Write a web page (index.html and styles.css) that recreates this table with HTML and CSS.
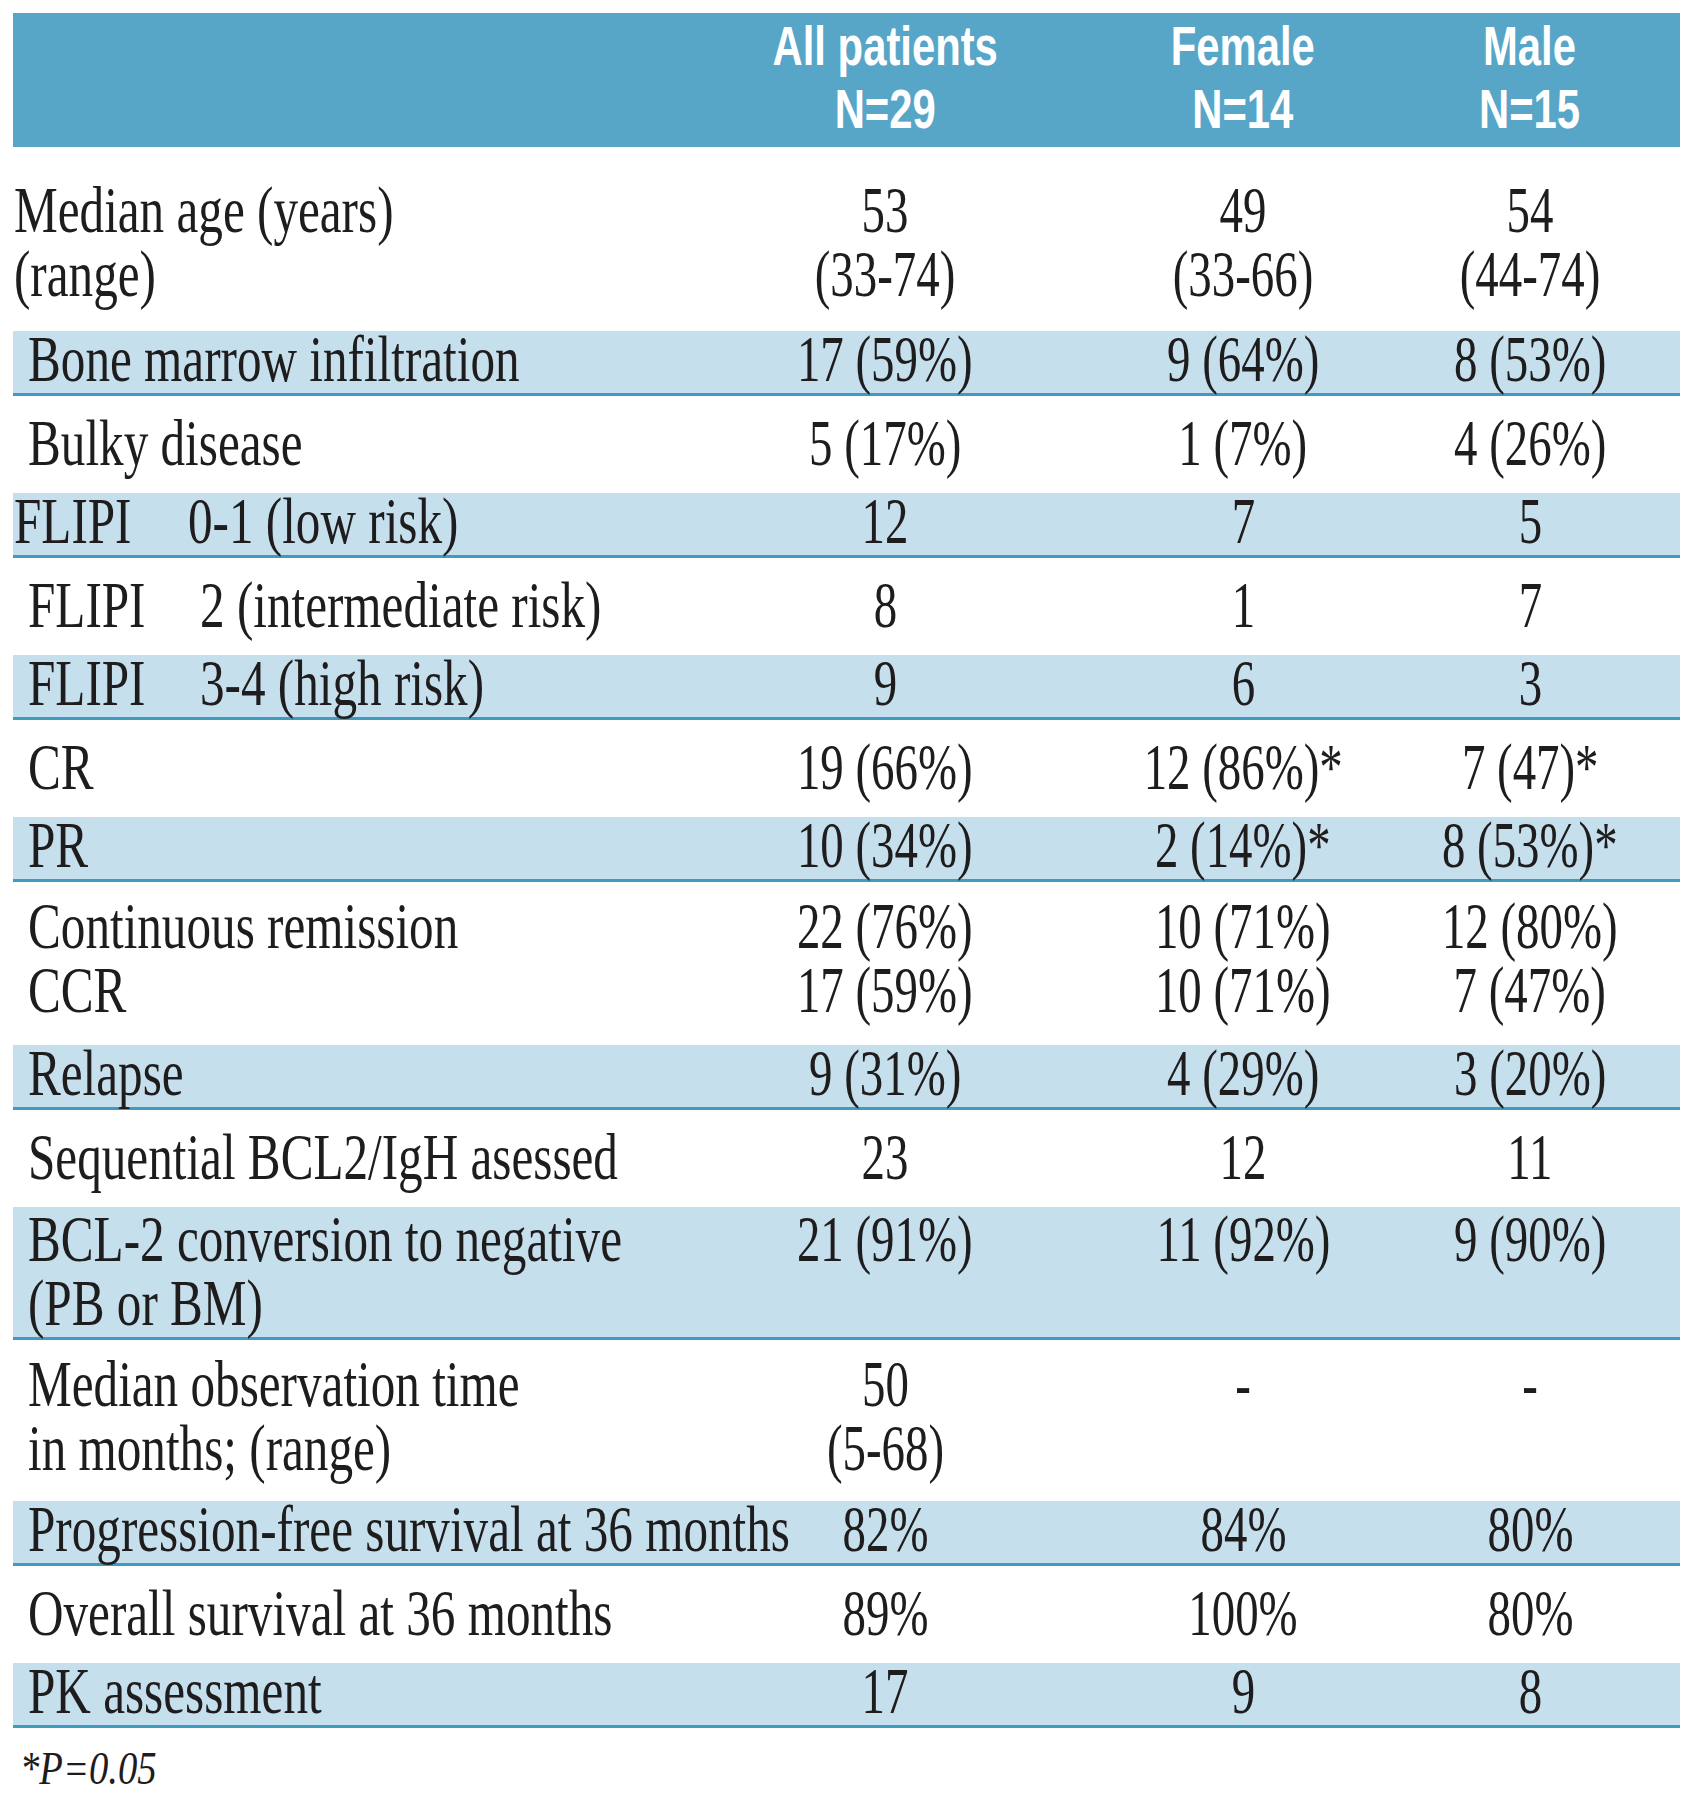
FILE: index.html
```html
<!DOCTYPE html>
<html lang="en">
<head>
<meta charset="utf-8">
<title>Patient characteristics</title>
<link rel="stylesheet" href="styles.css">
</head>
<body>
<div class="table">
  <div class="row head">
    <div class="cell"></div>
    <div class="cell val"><span class="h">All patients<br>N=29</span></div>
    <div class="cell val"><span class="h">Female<br>N=14</span></div>
    <div class="cell val"><span class="h">Male<br>N=15</span></div>
  </div>

  <div class="row white multi r-median">
    <div class="cell label flush"><span class="t">Median age (years)<br>(range)</span></div>
    <div class="cell val"><span class="t">53<br>(33-74)</span></div>
    <div class="cell val"><span class="t">49<br>(33-66)</span></div>
    <div class="cell val"><span class="t">54<br>(44-74)</span></div>
  </div>

  <div class="row blue">
    <div class="cell label"><span class="t">Bone marrow infiltration</span></div>
    <div class="cell val"><span class="t">17 (59%)</span></div>
    <div class="cell val"><span class="t">9 (64%)</span></div>
    <div class="cell val"><span class="t">8 (53%)</span></div>
  </div>

  <div class="row white">
    <div class="cell label"><span class="t">Bulky disease</span></div>
    <div class="cell val"><span class="t">5 (17%)</span></div>
    <div class="cell val"><span class="t">1 (7%)</span></div>
    <div class="cell val"><span class="t">4 (26%)</span></div>
  </div>

  <div class="row blue">
    <div class="cell label flush"><span class="t key key-wide">FLIPI</span><span class="t">0-1 (low risk)</span></div>
    <div class="cell val"><span class="t">12</span></div>
    <div class="cell val"><span class="t">7</span></div>
    <div class="cell val"><span class="t">5</span></div>
  </div>

  <div class="row white">
    <div class="cell label"><span class="t key">FLIPI</span><span class="t">2 (intermediate risk)</span></div>
    <div class="cell val"><span class="t">8</span></div>
    <div class="cell val"><span class="t">1</span></div>
    <div class="cell val"><span class="t">7</span></div>
  </div>

  <div class="row blue">
    <div class="cell label"><span class="t key">FLIPI</span><span class="t">3-4 (high risk)</span></div>
    <div class="cell val"><span class="t">9</span></div>
    <div class="cell val"><span class="t">6</span></div>
    <div class="cell val"><span class="t">3</span></div>
  </div>

  <div class="row white">
    <div class="cell label"><span class="t">CR</span></div>
    <div class="cell val"><span class="t">19 (66%)</span></div>
    <div class="cell val"><span class="t">12 (86%)*</span></div>
    <div class="cell val"><span class="t">7 (47)*</span></div>
  </div>

  <div class="row blue">
    <div class="cell label"><span class="t">PR</span></div>
    <div class="cell val"><span class="t">10 (34%)</span></div>
    <div class="cell val"><span class="t">2 (14%)*</span></div>
    <div class="cell val"><span class="t">8 (53%)*</span></div>
  </div>

  <div class="row white multi r-cont">
    <div class="cell label"><span class="t">Continuous remission<br>CCR</span></div>
    <div class="cell val"><span class="t">22 (76%)<br>17 (59%)</span></div>
    <div class="cell val"><span class="t">10 (71%)<br>10 (71%)</span></div>
    <div class="cell val"><span class="t">12 (80%)<br>7 (47%)</span></div>
  </div>

  <div class="row blue">
    <div class="cell label"><span class="t">Relapse</span></div>
    <div class="cell val"><span class="t">9 (31%)</span></div>
    <div class="cell val"><span class="t">4 (29%)</span></div>
    <div class="cell val"><span class="t">3 (20%)</span></div>
  </div>

  <div class="row white">
    <div class="cell label"><span class="t">Sequential BCL2/IgH asessed</span></div>
    <div class="cell val"><span class="t">23</span></div>
    <div class="cell val"><span class="t">12</span></div>
    <div class="cell val"><span class="t">11</span></div>
  </div>

  <div class="row blue multi r-bcl">
    <div class="cell label"><span class="t">BCL-2 conversion to negative<br>(PB or BM)</span></div>
    <div class="cell val"><span class="t">21 (91%)</span></div>
    <div class="cell val"><span class="t">11 (92%)</span></div>
    <div class="cell val"><span class="t">9 (90%)</span></div>
  </div>

  <div class="row white multi r-obs">
    <div class="cell label"><span class="t">Median observation time<br>in months; (range)</span></div>
    <div class="cell val"><span class="t">50<br>(5-68)</span></div>
    <div class="cell val"><span class="t">-</span></div>
    <div class="cell val"><span class="t">-</span></div>
  </div>

  <div class="row blue">
    <div class="cell label"><span class="t">Progression-free survival at 36 months</span></div>
    <div class="cell val"><span class="t">82%</span></div>
    <div class="cell val"><span class="t">84%</span></div>
    <div class="cell val"><span class="t">80%</span></div>
  </div>

  <div class="row white">
    <div class="cell label"><span class="t">Overall survival at 36 months</span></div>
    <div class="cell val"><span class="t">89%</span></div>
    <div class="cell val"><span class="t">100%</span></div>
    <div class="cell val"><span class="t">80%</span></div>
  </div>

  <div class="row blue">
    <div class="cell label"><span class="t">PK assessment</span></div>
    <div class="cell val"><span class="t">17</span></div>
    <div class="cell val"><span class="t">9</span></div>
    <div class="cell val"><span class="t">8</span></div>
  </div>
</div>
<p class="note"><span class="note-text">*P=0.05</span></p>
</body>
</html>
```

FILE: styles.css
```css
html, body {
  margin: 0;
  padding: 0;
  background: #ffffff;
}

body {
  font-family: "Liberation Serif", "Times New Roman", serif;
  color: #1e1c1c;
  overflow: hidden;
}

.table {
  margin: 13px 0 0 13px;
  width: 1667px;
}

.row {
  display: grid;
  grid-template-columns: 651px 442px 274px 300px;
}

.cell {
  display: flex;
  align-items: flex-start;
  white-space: nowrap;
}

.label {
  padding-left: 15px;
}

.label.flush {
  padding-left: 1px;
}

.val {
  justify-content: center;
}

.t {
  display: block;
  flex: none;
  font-size: 66px;
  line-height: 55px;
  transform: scaleX(0.745);
  transform-origin: 0 0;
}

.val .t {
  text-align: center;
  transform: scaleX(0.71);
  transform-origin: 50% 0;
}

.key {
  width: 172px;
}

.key-wide {
  width: 174px;
}

/* header */
.head {
  background: #57a6c8;
  color: #ffffff;
  padding: 2px 0 6px;
}

.h {
  display: block;
  flex: none;
  font-family: "Liberation Sans", Arial, sans-serif;
  font-weight: 700;
  font-size: 55px;
  line-height: 63px;
  text-align: center;
  transform: scaleX(0.76);
  transform-origin: 50% 0;
}

/* body rows */
.white {
  padding: 19px 0 23px;
}

.blue {
  background: #c6dfed;
  border-bottom: 3px solid #3f9cc0;
  padding: 0 0 7px;
}

.multi .t {
  line-height: 64px;
}

.r-median {
  padding: 31px 0 25px;
}

.r-cont {
  padding: 12px 0 23px;
}

.r-bcl {
  padding: 0 0 2px;
}

.r-obs {
  padding: 12px 0 21px;
}

/* footnote */
.note {
  margin: 16px 0 0 20px;
}

.note-text {
  display: inline-block;
  font-style: italic;
  font-size: 46px;
  line-height: 50px;
  transform: scaleX(0.84);
  transform-origin: 0 0;
}
```
